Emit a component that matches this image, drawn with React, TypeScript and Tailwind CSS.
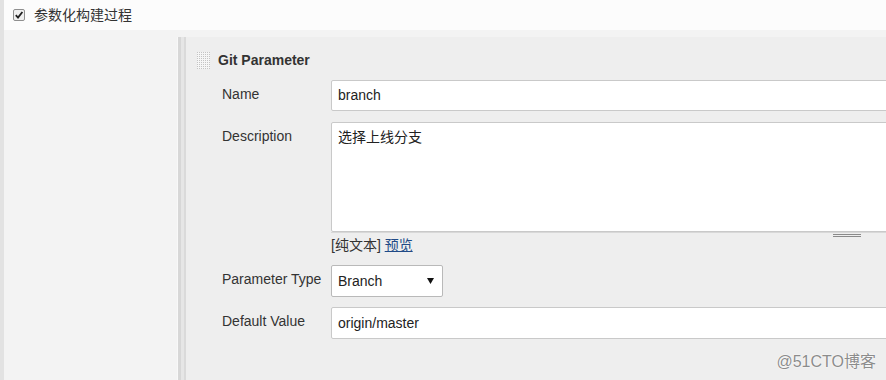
import React from "react";

const FONT = { fontFamily: '"Liberation Sans", Arial, "Noto Sans CJK SC", sans-serif' };

function Handle() {
  const dots = [];
  for (let i = 0; i < 7; i++) {
    for (let j = 0; j < 9; j++) {
      dots.push(<rect key={`${i}-${j}`} x={i * 2} y={j * 2} width={1} height={1} fill="#c4c4c4" />);
    }
  }
  return (
    <svg width="13" height="17" viewBox="0 0 13 17" className="shrink-0">
      <rect x="0" y="0" width="13" height="17" fill="#f6f6f6" />
      {dots}
    </svg>
  );
}

function Checkbox() {
  return (
    <svg width="12" height="12" viewBox="0 0 12 12" className="shrink-0">
      <rect x="0.5" y="0.5" width="11" height="11" rx="1.5" fill="#efefef" stroke="#8f8f8f" />
      <path d="M2.8 6.2 L5 8.6 L9.4 3" fill="none" stroke="#1f1f1f" strokeWidth="1.8" />
    </svg>
  );
}

function Label({ children }: { children: React.ReactNode }) {
  return (
    <div className="w-[109px] shrink-0 pt-[5px] text-[14px] leading-[18px] text-[#333]">{children}</div>
  );
}

export default function App() {
  return (
    <div className="relative w-[886px] h-[380px] overflow-hidden bg-[#f3f3f3] flex" style={FONT}>
      <div className="w-[4px] shrink-0 bg-[#e2e2e2]" />
      <div className="flex-1 flex flex-col min-w-0">
        <div className="h-[30px] shrink-0 bg-[#fcfcfc] flex items-center pl-[9px] gap-[9px]">
          <Checkbox />
          <span className="text-[14px] text-[#333] leading-[18px]">参数化构建过程</span>
        </div>
        <div className="flex-1 flex pt-[7px] min-w-0">
          <div className="w-[173px] shrink-0" />
          <div className="flex-1 flex min-w-0 border-l border-[#f8f8f8]">
            <div className="flex-1 flex min-w-0 border-l-[3px] border-[#d7d7d7]">
              <div className="flex-1 flex min-w-0 border-l-[3px] border-[#e6e6e6]">
                <div className="flex-1 min-w-0 border-l-[2px] border-[#dadada] bg-[#eeeeee] pt-[14px] pl-[11px]">
                  <div className="flex items-center h-[18px] gap-[8px]">
                    <Handle />
                    <span className="text-[14px] font-bold text-[#333]">Git Parameter</span>
                  </div>
                  <div className="pl-[25px]">
                    <div className="flex mt-[11px]">
                      <Label>Name</Label>
                      <div className="w-[600px] shrink-0 h-[31px] bg-white border border-[#c9c9c9] rounded-l-[2px] flex items-center pl-[6px] text-[14px] text-[#222]">
                        branch
                      </div>
                    </div>
                    <div className="flex mt-[11px]">
                      <Label>Description</Label>
                      <div className="flex flex-col">
                        <div className="w-[600px] h-[110px] bg-white border border-[#c9c9c9] rounded-l-[2px] pl-[6px] pt-[5px] text-[14px] leading-[18px] text-[#222]">
                          选择上线分支
                        </div>
                        <div className="h-[4px] relative border-t border-[#d8d8d8]">
                          <div className="absolute left-[502px] top-[1px] w-[28px] h-[3px] border-t border-b border-[#8a8a8a]" />
                        </div>
                        <div className="h-[18px] text-[14px] leading-[18px] text-[#333]">
                          [纯文本] <span className="text-[#204a87] underline">预览</span>
                        </div>
                      </div>
                    </div>
                    <div className="flex mt-[11px]">
                      <Label>Parameter Type</Label>
                      <div className="w-[112px] h-[32px] bg-white border border-[#b9b9b9] rounded-[2px] flex items-center justify-between pl-[6px] pr-[8px] text-[14px] text-[#222]">
                        <span>Branch</span>
                        <svg width="7" height="6" viewBox="0 0 7 6">
                          <path d="M0 0 H7 L3.5 6 Z" fill="#111" />
                        </svg>
                      </div>
                    </div>
                    <div className="flex mt-[10px]">
                      <Label>Default Value</Label>
                      <div className="w-[600px] shrink-0 h-[32px] bg-white border border-[#c9c9c9] rounded-l-[2px] flex items-center pl-[6px] text-[14px] text-[#222]">
                        origin/master
                      </div>
                    </div>
                  </div>
                </div>
              </div>
            </div>
          </div>
        </div>
      </div>
      <div
        className="absolute right-[10px] bottom-[6px] text-[16px] text-[#8c8c8c]"
        style={{ ...FONT, textShadow: "0 0 2px #fff, 0 0 1px #fff" }}
      >
        @51CTO博客
      </div>
    </div>
  );
}
